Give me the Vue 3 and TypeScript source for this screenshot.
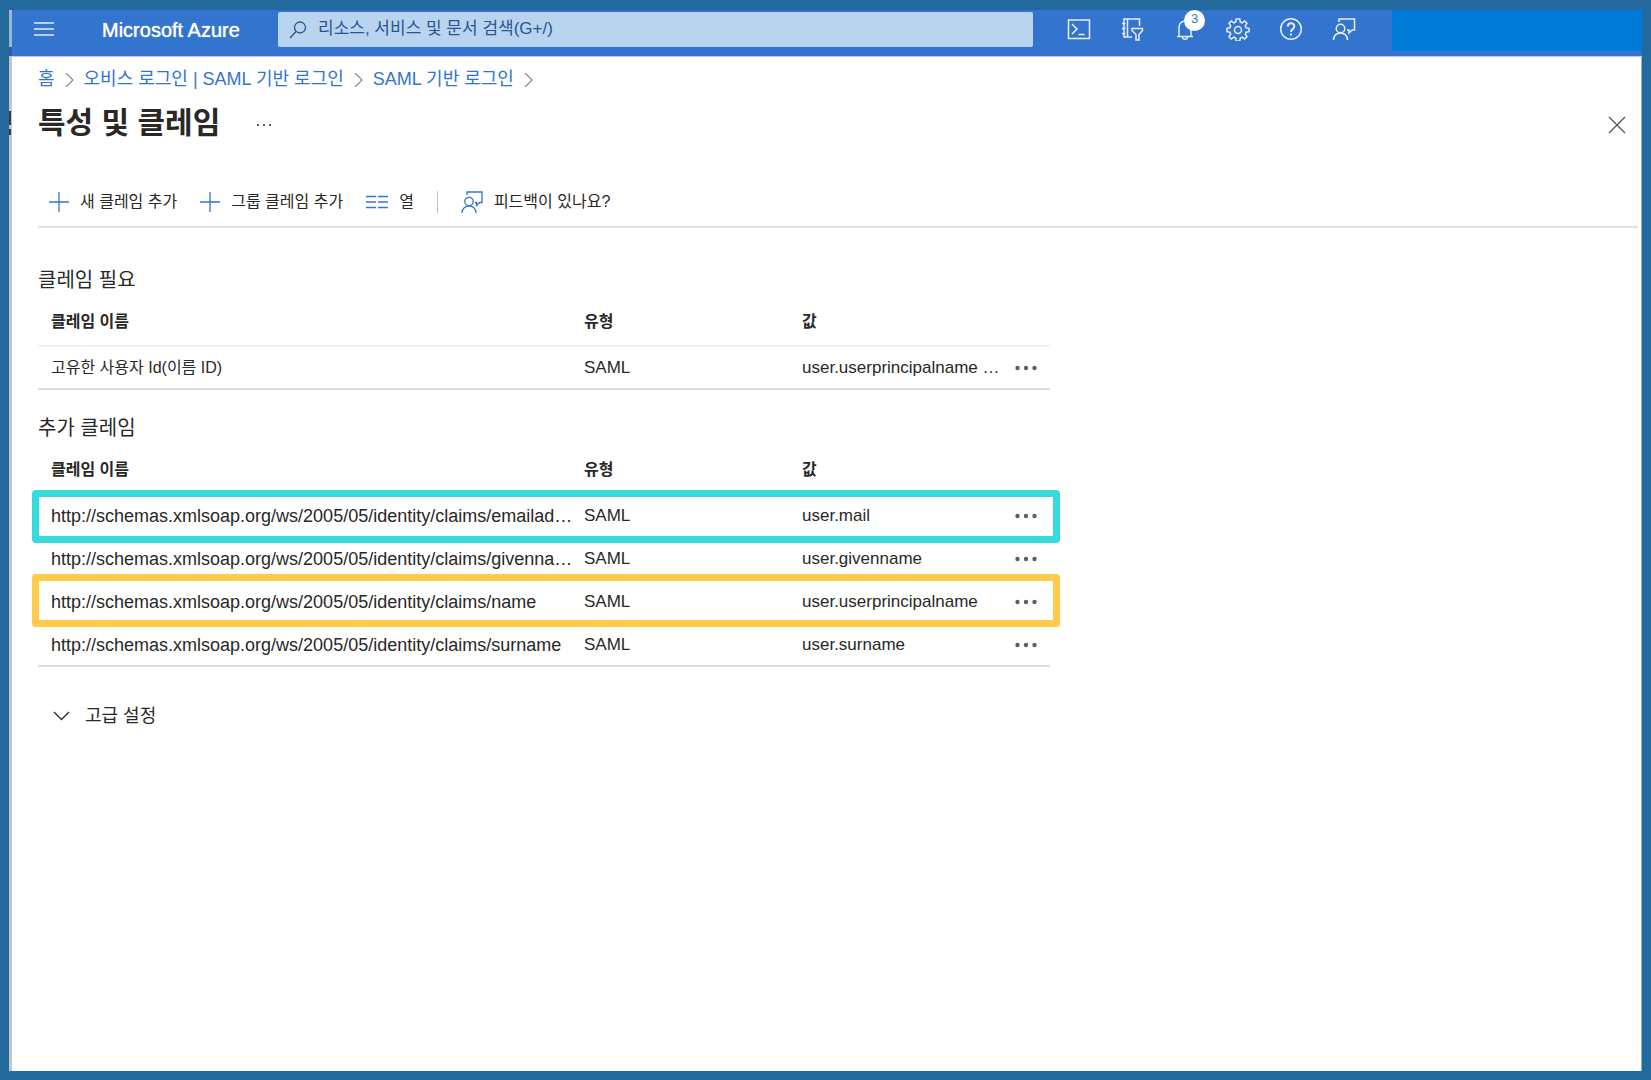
<script setup lang="ts">
interface Claim {
  name: string
  type: string
  value: string
  kind: 'label' | 'url'
  mark?: 'mail' | 'principal'
}

interface ClaimSection {
  id: string
  title: string
  claims: Claim[]
}

const schema = 'http://schemas.xmlsoap.org/ws/2005/05/identity/claims/'

const crumbs: string[] = ['홈', '오비스 로그인 | SAML 기반 로그인', 'SAML 기반 로그인']

const sections: ClaimSection[] = [
  {
    id: 'required',
    title: '클레임 필요',
    claims: [{ name: '고유한 사용자 Id(이름 ID)', type: 'SAML', value: 'user.userprincipalname …', kind: 'label' }],
  },
  {
    id: 'additional',
    title: '추가 클레임',
    claims: [
      { name: schema + 'emailad…', type: 'SAML', value: 'user.mail', kind: 'url', mark: 'mail' },
      { name: schema + 'givenna…', type: 'SAML', value: 'user.givenname', kind: 'url' },
      { name: schema + 'name', type: 'SAML', value: 'user.userprincipalname', kind: 'url', mark: 'principal' },
      { name: schema + 'surname', type: 'SAML', value: 'user.surname', kind: 'url' },
    ],
  },
]
</script>

<template>
  <div class="frame">
    <div class="edge"></div>
    <div class="portal">
      <header class="topbar">
        <button class="icon-btn menu" type="button" aria-label="메뉴">
          <svg width="20" height="16" viewBox="0 0 20 16"><path d="M0 2h20M0 8h20M0 14h20" /></svg>
        </button>
        <a class="brand" href="#">Microsoft Azure</a>
        <div class="search">
          <svg width="18" height="18" viewBox="0 0 18 18"><circle cx="11" cy="6.500" r="5.500" /><path d="M7 10.500L1 17" /></svg>
          <input type="text" aria-label="검색" placeholder="리소스, 서비스 및 문서 검색(G+/)" />
        </div>
        <nav class="tools">
          <button class="icon-btn" type="button" aria-label="Cloud Shell">
            <svg width="24" height="24" viewBox="0 0 24 24"><path d="M1.500 3h21v18.500h-21zM5 7l5 5-5 5M11.500 17.500h6" /></svg>
          </button>
          <button class="icon-btn" type="button" aria-label="디렉터리 필터">
            <svg width="24" height="24" viewBox="0 0 24 24">
              <path d="M12 20H4V2h15.500v7M7.500 2v18M2 6.500h3.500M2 11.500h3.500M2 16.500h3.500M12 11.500h10.500v2L19 17.500V23h-3v-5.500l-4-4z" />
            </svg>
          </button>
          <button class="icon-btn bell" type="button" aria-label="알림">
            <svg width="24" height="24" viewBox="0 0 24 24">
              <path d="M4 19.500h16M6 19.500V10a6 6 0 0 1 12 0v9.500M9.500 20c0 3 5 3 5 0" />
            </svg>
            <span class="badge">3</span>
          </button>
          <button class="icon-btn" type="button" aria-label="설정">
            <svg width="24" height="24" viewBox="0 0 24 24">
              <path d="M10.200 2h3.600l.5 3 1.900.8 2.500-1.800 2.300 2.400-1.700 2.500.8 1.900 2.900.5v3.400l-2.900.5-.8 1.900 1.700 2.500-2.300 2.400-2.500-1.800-1.900.8-.5 3h-3.600l-.5-3-1.900-.8L5.300 22 3 19.600l1.700-2.500-.8-1.900-2.900-.5v-3.400l2.900-.5.8-1.900L3 6.400 5.300 4l2.500 1.800L9.700 5z" />
              <circle cx="12" cy="13" r="3.500" />
            </svg>
          </button>
          <button class="icon-btn" type="button" aria-label="도움말">
            <svg width="24" height="24" viewBox="0 0 24 24">
              <circle cx="12" cy="12" r="10.300" />
              <path class="bold" d="M8.800 9.500c0-4.200 6.500-4.200 6.500-.3 0 2.800-3.300 2.800-3.300 5.800M12 16.500v2" />
            </svg>
          </button>
          <button class="icon-btn" type="button" aria-label="피드백">
            <svg width="24" height="24" viewBox="0 0 24 24">
              <path d="M7 5V2h15.500v11H20l-3 3v-3h-2M1.500 23c0-9.500 14-9.500 14 0" />
              <circle cx="8.500" cy="11.500" r="4.300" />
            </svg>
          </button>
        </nav>
        <div class="account"></div>
      </header>

      <main class="blade">
        <nav class="crumbs">
          <template v-for="crumb in crumbs" :key="crumb">
            <a href="#">{{ crumb }}</a>
            <svg width="9" height="14" viewBox="0 0 9 14"><path d="M1 0l7 7-7 7" /></svg>
          </template>
        </nav>

        <div class="heading">
          <h1>특성 및 클레임</h1>
          <button class="more" type="button" aria-label="추가 옵션">
            <svg width="16" height="4" viewBox="0 0 16 4"><path d="M1 1h2v2H1zM7 1h2v2H7zM13 1h2v2h-2z" /></svg>
          </button>
          <button class="close" type="button" aria-label="닫기">
            <svg width="18" height="18" viewBox="0 0 18 18"><path d="M1 1l16 16M17 1L1 17" /></svg>
          </button>
        </div>

        <div class="commands">
          <button type="button">
            <svg width="20" height="20" viewBox="0 0 20 20"><path d="M10 0v20M0 10h20" /></svg>
            새 클레임 추가
          </button>
          <button type="button">
            <svg width="20" height="20" viewBox="0 0 20 20"><path d="M10 0v20M0 10h20" /></svg>
            그룹 클레임 추가
          </button>
          <button type="button">
            <svg width="22" height="20" viewBox="0 0 22 20">
              <path d="M0 4.500h10M12 4.500h10M0 10h10M12 10h10M0 15.500h10M12 15.500h10" />
            </svg>
            열
          </button>
          <span class="divider"></span>
          <button type="button">
            <svg width="22" height="22" viewBox="0 0 22 22">
              <path d="M6 4V1h15v10.500h-2.500l-3 3v-3H14M1 22c0-9.500 14-9.500 14 0" />
              <circle cx="8" cy="10.500" r="4.200" />
            </svg>
            피드백이 있나요?
          </button>
        </div>

        <section v-for="section in sections" :key="section.id" class="claims">
          <h2 :id="section.id">{{ section.title }}</h2>
          <table :aria-labelledby="section.id">
            <colgroup>
              <col class="col-name" />
              <col class="col-type" />
              <col />
              <col class="col-menu" />
            </colgroup>
            <thead>
              <tr>
                <th scope="col">클레임 이름</th>
                <th scope="col">유형</th>
                <th scope="col">값</th>
                <td></td>
              </tr>
            </thead>
            <tbody>
              <tr v-for="claim in section.claims" :key="claim.name" :class="claim.mark && ['marked', claim.mark]">
                <td :class="claim.kind">{{ claim.name }}</td>
                <td>{{ claim.type }}</td>
                <td>{{ claim.value }}</td>
                <td class="menu-cell">
                  <button type="button" aria-label="행 메뉴">
                    <svg width="22" height="6" viewBox="0 0 22 6">
                      <circle cx="2.500" cy="3" r="2.200" /><circle cx="11" cy="3" r="2.200" /><circle cx="19.500" cy="3" r="2.200" />
                    </svg>
                  </button>
                </td>
              </tr>
            </tbody>
          </table>
        </section>

        <button class="advanced" type="button">
          <svg width="17" height="10" viewBox="0 0 17 10"><path d="M1 1l7.500 7.500L16 1" /></svg>
          고급 설정
        </button>
      </main>
    </div>
  </div>
</template>

<style>
body {
  margin: 0;
  background: #226a9e;
}
</style>

<style scoped>
.frame {
  box-sizing: border-box;
  min-height: 100vh;
  padding: 10px 9px 9px;
  display: flex;
  background: #226a9e;
  color: #292827;
  font-family: "Liberation Sans", "Noto Sans CJK KR", sans-serif;
  font-size: 17px;
}

button,
input {
  font-family: inherit;
  color: inherit;
}

button {
  padding: 0;
  border: 0;
  background: none;
}

a {
  text-decoration: none;
}

svg {
  flex: none;
  display: block;
  fill: none;
  stroke: currentColor;
  stroke-width: 1.3;
}

/* Sliver of the page behind the blade */
.edge {
  flex: none;
  width: 3px;
  background:
    linear-gradient(#3a3a3a, #3a3a3a) 0 101px / 2px 14px no-repeat,
    linear-gradient(#3a3a3a, #3a3a3a) 0 119px / 2px 6px no-repeat,
    linear-gradient(#9fb4cf 37px, #2d5fa8 37px, #2d5fa8 46px, #c5c5c5 46px);
}

.portal {
  flex: 1;
  min-width: 0;
  background: #fff;
  border-right: 1px solid #8fb3cc;
}

.topbar {
  display: flex;
  align-items: flex-start;
  height: 46px;
  margin-right: -1px;
  background: #3375ce;
  border-bottom: 1px solid #b5cdee;
}

.icon-btn {
  display: flex;
  align-items: center;
  justify-content: center;
  width: 24px;
  height: 24px;
  color: #e6eefa;
}

.icon-btn svg {
  stroke-width: 1.5;
}

.menu {
  margin: 7px 0 0 20px;
}

.brand {
  width: 176px;
  margin-left: 46px;
  line-height: 40px;
  font-size: 20px;
  color: #fff;
  text-shadow: 0 0 1px #fff;
  white-space: nowrap;
}

.search {
  flex: 1;
  min-width: 0;
  display: flex;
  align-items: center;
  gap: 11px;
  height: 35px;
  margin-top: 2px;
  padding-left: 11px;
  border-radius: 2px;
  background: #b8d4ef;
  color: #285590;
}

.search input {
  flex: 1;
  min-width: 0;
  height: 32px;
  padding: 0 0 2px;
  border: 0;
  outline: 0;
  background: transparent;
  font-size: 17px;
}

.search input::placeholder {
  color: #285590;
  opacity: 1;
}

.tools {
  display: flex;
  gap: 29px;
  margin: 7px 36px 0 34px;
}

.bell {
  position: relative;
}

.badge {
  position: absolute;
  left: 11px;
  top: -7px;
  width: 21px;
  height: 21px;
  border-radius: 50%;
  background: #fff;
  color: #3375ce;
  font-size: 13px;
  line-height: 17px;
  text-align: center;
}

.icon-btn .bold {
  stroke-width: 2;
}

.account {
  width: 250px;
  height: 41px;
  background: #007ad8;
}

.blade {
  padding: 7px 3px 9px 26px;
}

.crumbs {
  display: flex;
  align-items: center;
  gap: 10px;
  height: 26px;
  font-size: 18px;
  color: #3375ce;
  white-space: nowrap;
}

.crumbs a {
  color: inherit;
}

.crumbs svg {
  color: #8c8c8c;
  margin-top: 6px;
}

.heading {
  display: flex;
  align-items: center;
  height: 50px;
  margin-top: 10px;
}

h1 {
  margin: 0;
  padding-bottom: 4px;
  font-size: 30px;
  line-height: 46px;
  font-weight: 700;
}

.more {
  margin-left: 36px;
}

.more svg {
  fill: #5c5c5c;
  stroke: none;
}

.close {
  margin-left: auto;
  margin-right: 12px;
  color: #555;
}

.commands {
  display: flex;
  align-items: center;
  gap: 23px;
  height: 48px;
  padding: 28px 0 0 11px;
  border-bottom: 2px solid #e1e1e1;
}

.commands button {
  display: flex;
  align-items: center;
  gap: 11px;
  font-size: 16px;
  line-height: 24px;
  white-space: nowrap;
}

.commands svg {
  color: #3375ce;
}

.divider {
  width: 1px;
  height: 22px;
  background: #c4c4c4;
}

.claims {
  max-width: 1012px;
  margin-top: 24px;
}

.commands + .claims {
  margin-top: 38px;
}

h2 {
  margin: 0 0 6px;
  font-size: 20px;
  line-height: 28px;
  font-weight: 400;
}

table {
  width: 100%;
  table-layout: fixed;
  border-collapse: separate;
  border-spacing: 0;
}

.col-name {
  width: 533px;
}

.col-type {
  width: 218px;
}

.col-menu {
  width: 46px;
}

th,
td {
  box-sizing: border-box;
  height: 43px;
  padding: 0 0 0 13px;
  border-bottom: 2px solid #dcdcdc;
  line-height: 24px;
  text-align: left;
  white-space: nowrap;
}

thead th,
thead td {
  height: 47px;
  padding-bottom: 2px;
  border-bottom-color: #f1f1f1;
  font-size: 16px;
}

.label {
  font-size: 16px;
}

.url {
  font-size: 18px;
}

.menu-cell {
  padding-left: 11px;
}

.menu-cell button {
  display: block;
}

.menu-cell svg {
  fill: #5f5f5f;
  stroke: none;
}

/* Callout frames drawn over the table rows */
.marked {
  position: relative;
}

.marked .menu-cell::after {
  content: "";
  position: absolute;
  border: 7px solid;
  border-radius: 4px;
  pointer-events: none;
}

.mail .menu-cell::after {
  inset: -5px -10px -5px -6px;
  border-color: #38dadb;
}

.principal .menu-cell::after {
  inset: -7px -10px -3px -6px;
  border-color: #ffcb49;
}

.advanced {
  display: flex;
  align-items: center;
  gap: 15px;
  margin: 37px 0 0 15px;
  font-size: 18px;
  line-height: 24px;
}
</style>
